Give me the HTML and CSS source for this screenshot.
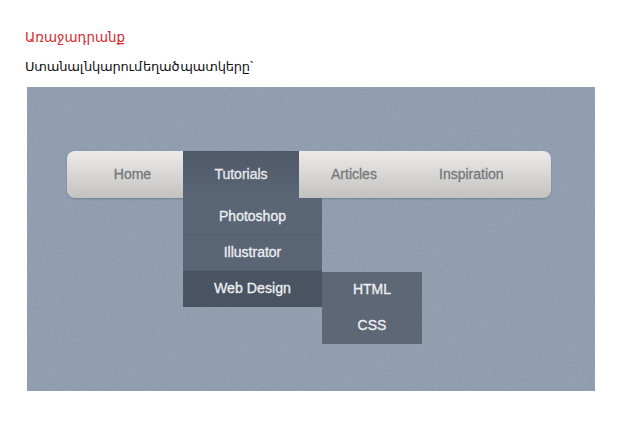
FILE: index.html
```html
<!DOCTYPE html>
<html lang="hy">
<head>
    <meta charset="UTF-8">
    <meta name="viewport" content="width=device-width, initial-scale=1.0">
    <title>Առաջադրանք</title>
    <link rel="stylesheet" href="styles.css">
</head>
<body>
    <h1 class="task-title">Առաջադրանք</h1>
    <p class="task-text">Ստանալ նկարում եղած պատկերը`</p>
    <div class="picture">
        <!-- grainy wallpaper behind the menu -->
        <svg class="picture-grain" width="568" height="304">
            <filter id="grain">
                <feTurbulence type="fractalNoise" baseFrequency="0.35" numOctaves="3" seed="4"/>
                <feColorMatrix values="0 0 0 0 0.35  0 0 0 0 0.42  0 0 0 0 0.52  0.5 0 0 0 -0.12"/>
            </filter>
            <rect width="568" height="304" filter="url(#grain)"/>
        </svg>
        <nav class="menu">
            <a class="menu-item menu-home">Home</a>
            <div class="menu-item menu-tutorials">
                <span class="menu-label">Tutorials</span>
                <div class="dropdown">
                    <a class="dropdown-item">Photoshop</a>
                    <a class="dropdown-item">Illustrator</a>
                    <div class="dropdown-item dropdown-active">
                        Web Design
                        <div class="submenu">
                            <a class="submenu-item">HTML</a>
                            <a class="submenu-item">CSS</a>
                        </div>
                    </div>
                </div>
            </div>
            <a class="menu-item menu-articles">Articles</a>
            <a class="menu-item menu-inspiration">Inspiration</a>
        </nav>
    </div>
</body>
</html>
```

FILE: styles.css
```css
body {
    margin: 0;
    padding: 29px 0 0 25px;
    background-color: #fff;
    font-family: "Noto Sans", "DejaVu Sans", sans-serif;
}
.task-title {
    margin: 0;
    color: #d9282c;
    font-size: 13.4px;
    font-weight: normal;
    line-height: 16px;
}
.task-text {
    margin: 13px 0 0;
    color: #111;
    font-size: 13px;
    line-height: 16px;
    letter-spacing: -0.2px;
    word-spacing: -2.3px;
}
.picture {
    position: relative;
    box-sizing: border-box;
    width: 568px;
    height: 304px;
    margin: 13px 0 0 2px;
    padding: 64px 44px 0 40px;
    background-color: #8f9cae;
    font-family: "Liberation Sans", Arial, sans-serif;
    -webkit-text-stroke: 0.3px;
}
.picture-grain {
    position: absolute;
    top: 0;
    left: 0;
}
.menu {
    position: relative;
    display: flex;
    height: 47px;
    border-radius: 8px;
    background-image: linear-gradient(180deg, #ecebea, #c3c2bf);
    box-shadow: 0 1px 2px rgba(70, 80, 95, 0.4);
}
.menu-item {
    display: flex;
    align-items: center;
    justify-content: center;
    box-sizing: border-box;
    padding-bottom: 2px;
    color: #75777a;
    font-size: 14px;
}
.menu-home {
    width: 116px;
    padding-left: 15px;
}
.menu-tutorials {
    position: relative;
    width: 116px;
    color: #e8eaed;
    background-image: linear-gradient(180deg, #4f5968, #5a6575);
}
.menu-articles {
    width: 108px;
    margin-left: 32px;
    justify-content: flex-start;
}
.dropdown {
    position: absolute;
    top: 47px;
    left: 0;
    width: 139px;
    background-color: #5a6575;
}
.dropdown-item {
    position: relative;
    display: flex;
    align-items: center;
    justify-content: center;
    box-sizing: border-box;
    height: 36px;
    padding-bottom: 2px;
    border-bottom: 1px solid #555f6e;
    color: #eef0f2;
}
.dropdown-item:first-child {
    height: 37px;
    padding-bottom: 1px;
}
.dropdown-active {
    border-bottom: 0;
    background-color: #4a5361;
    font-size: 14.2px;
}
.submenu {
    position: absolute;
    top: 1px;
    left: 139px;
    width: 100px;
    background-color: #5d6776;
}
.submenu-item {
    display: flex;
    align-items: center;
    justify-content: center;
    box-sizing: border-box;
    height: 36px;
    padding-bottom: 2px;
    color: #eef0f2;
    font-size: 14px;
}
```
